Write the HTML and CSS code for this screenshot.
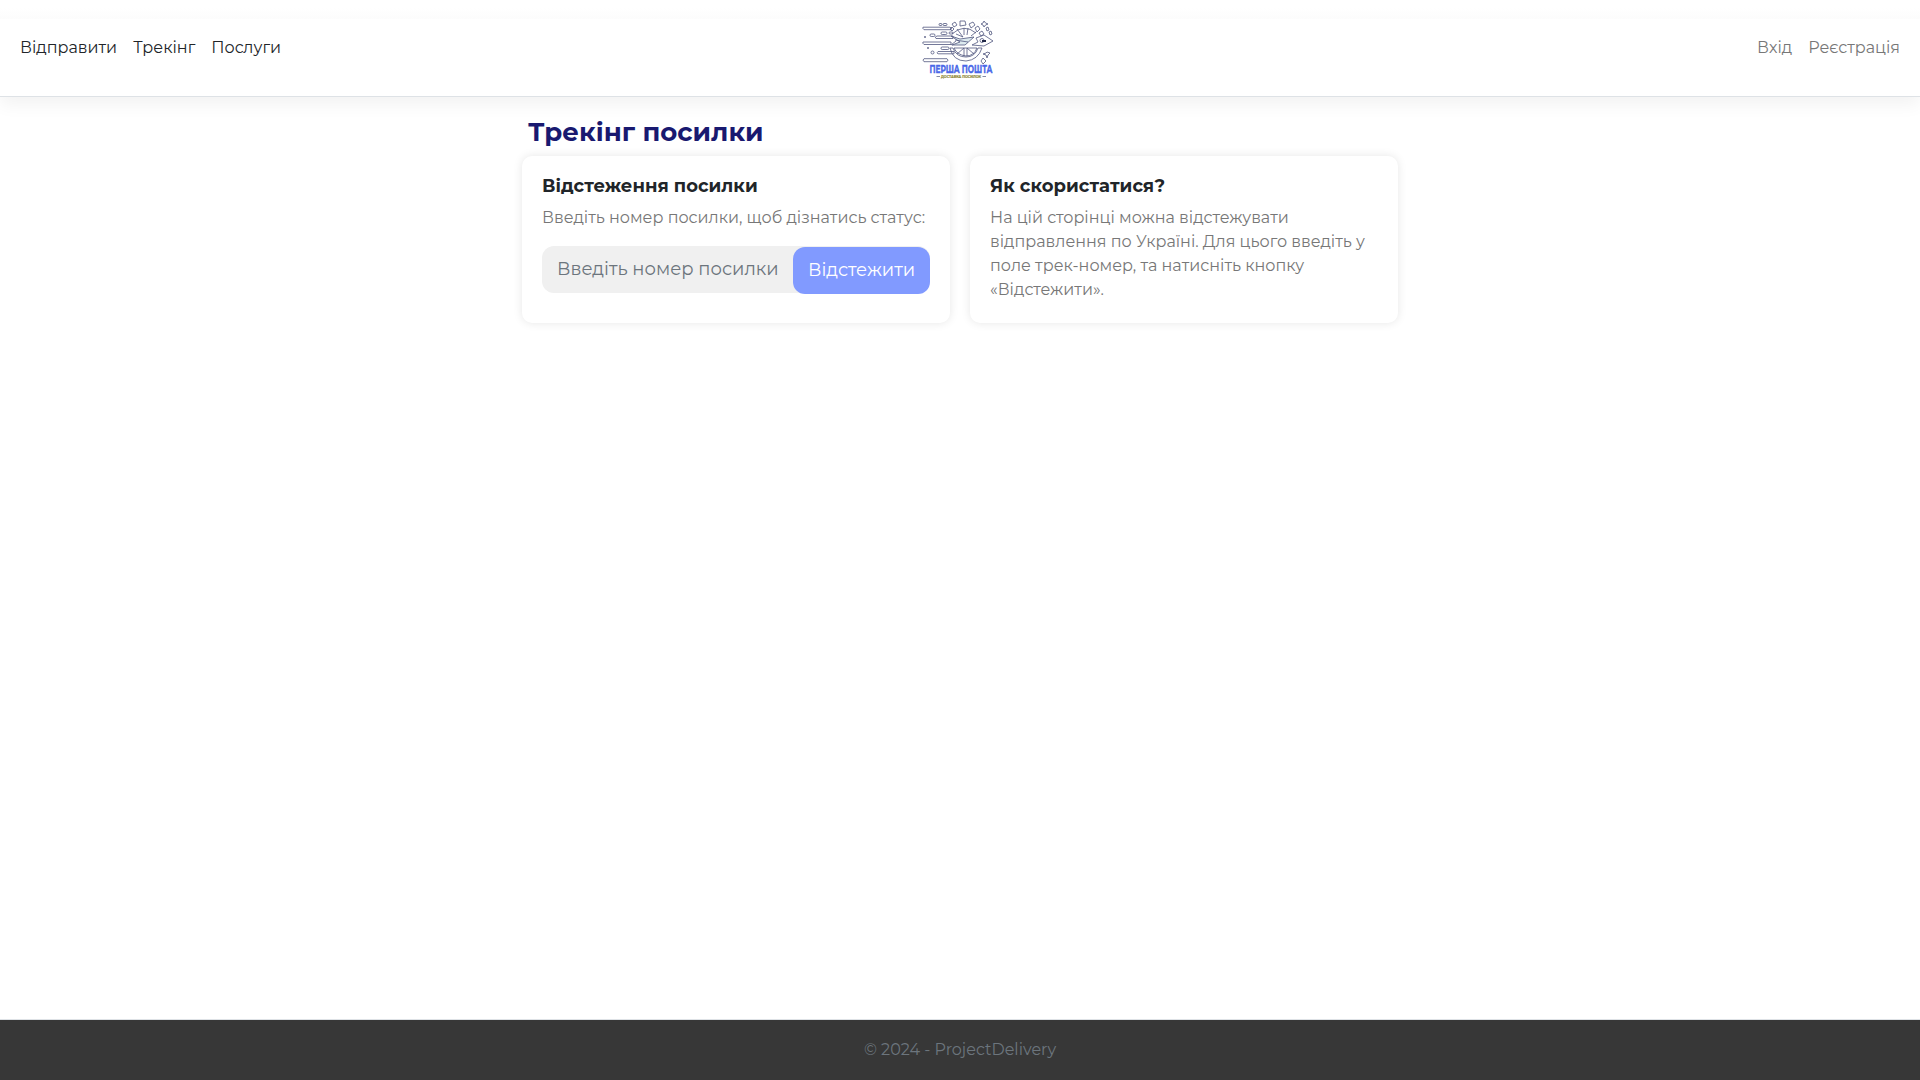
FILE: index.html
```html
<!DOCTYPE html>
<html lang="uk">
<head>
<meta charset="utf-8">
<title>Трекінг посилки</title>
<link rel="stylesheet" href="styles.css">
</head>
<body>
<header class="header">
  <nav class="nav">
    <a class="nav-link">Відправити</a>
    <a class="nav-link">Трекінг</a>
    <a class="nav-link">Послуги</a>
  </nav>
  <svg class="logo" width="80" height="66" viewBox="0 0 80 66" fill="none" stroke="#50577f" stroke-width="0.8">
    <g>
      <path d="M2 7.2H29Q32 8 30 9.700H3Q1 8 2 7.200ZM2 22H30V24.500H3Q1 23 2 22ZM3 38.700H26Q28 40 26 41.700H3Q1 40 3 38.700ZM16 16H32V18.500H15Q13 17 16 16ZM17 31.500H33V33.800H17Q15 33 17 31.500Z"/>
      <rect x="18" y="3.500" width="3" height="2" rx="1"/><rect x="22" y="3.500" width="4" height="2" rx="1"/>
      <rect x="9" y="14" width="5" height="2.500" rx="1.200"/><rect x="20" y="12" width="6" height="2.500" rx="1.200"/><rect x="28" y="12" width="4" height="2" rx="1"/>
      <rect x="20" y="27" width="8" height="2.500" rx="1.200"/><circle cx="11.500" cy="32.500" r="1.500"/><path d="M3 17h2M4 16v2M6 28h2M7 27v2"/>
    </g>
    <g>
      <path d="M31 14Q43 3 55 13M29 28Q32 41 45 41Q57 40 61 28L57 28Q54 37 45 37Q35 37 32 28Z"/>
      <path d="M33 28H56Q53 36 45 36Q36 35 33 28ZM43 28V36M46 28V36M36 34L43 28M53 34L46 28M35 14L42 17L36 9M43 15V8M46 15L47 8M50 16L55 12"/>
      <path d="M30 16L39 19L53 17L44 25L31 25L39 22Z" fill="#dce9ee"/><path d="M34 20L47 22M30 25L35 21"/>
      <path d="M55 18L63 15L72 21L63 26L51 25L57 22Z"/><circle cx="61" cy="20.500" r="2"/><path d="M61 21L65 21" stroke="#202746" stroke-width="2"/>
    </g>
    <g>
      <path d="M31 4L34 2L36 5L33 7ZM39 1H44L45 5L39 6ZM48 4L52 2L54 5L50 8ZM54 8L57 6L59 9L56 12ZM58 13L61 11L63 14L60 16ZM29 9L31 7L33 9L31 11Z"/>
      <path d="M63 1L64.500 3L67 4L64.500 5L63 7L62 5L60 4L62 3ZM65 8L67 7L68 10L66 11ZM68 12L70 11L71 14L69 15ZM66 32L69 33L67 35L66 38L65 35L62 34L65 33ZM62 38L65 41L62 44L60 41Z"/>
    </g>
    <text class="logo-name" x="8.500" y="52.500" textLength="63" lengthAdjust="spacingAndGlyphs">ПЕРША ПОШТА</text>
    <text class="logo-tagline" x="20" y="58" textLength="40" lengthAdjust="spacingAndGlyphs">ДОСТАВКА ПОСИЛОК</text>
    <path d="M15.500 56.500H19M61.500 56.500H65" stroke-width="0.7"/>
  </svg>
  <nav class="nav account">
    <a class="nav-link">Вхід</a>
    <a class="nav-link">Реєстрація</a>
  </nav>
</header>
<main class="page">
  <h1 class="title">Трекінг посилки</h1>
  <div class="cards">
    <section class="card">
      <h2 class="card-title">Відстеження посилки</h2>
      <p class="card-text">Введіть номер посилки, щоб дізнатись статус:</p>
      <form class="search">
        <input class="search-input" type="text" placeholder="Введіть номер посилки">
        <button class="search-button" type="button">Відстежити</button>
      </form>
    </section>
    <section class="card">
      <h2 class="card-title">Як скористатися?</h2>
      <p class="card-text">На цій сторінці можна відстежувати відправлення по Україні. Для цього введіть у поле трек-номер, та натисніть кнопку «Відстежити».</p>
    </section>
  </div>
</main>
<footer class="footer">© 2024 - ProjectDelivery</footer>
</body>
</html>
```
FILE: styles.css
```css
* { box-sizing: border-box; }

body {
  margin: 0;
  min-height: 1080px;
  display: flex;
  flex-direction: column;
  background: #fff;
  color: #212529;
  font-family: Montserrat, Inter, sans-serif;
  font-size: 16px;
  font-weight: 400;
  line-height: 24px;
}

.header {
  height: 97px;
  display: grid;
  grid-template-columns: 1fr 80px 1fr;
  align-items: start;
  padding: 0 20px;
  border-bottom: 1px solid #dee2e6;
  background: linear-gradient(#fff 8px, #fcfcfc 19px, #fff 19px);
  box-shadow: 0 8px 16px rgba(0, 0, 0, 0.05);
}

.nav { display: flex; gap: 16px; padding-top: 36px; }
.account { justify-content: flex-end; color: #777; }
.nav-link { white-space: nowrap; }
.logo { margin: 20px 0 0 1px; overflow: visible; }

.logo-name {
  font: 700 10px Montserrat, Inter, sans-serif;
  fill: #4967e8;
  stroke: #4967e8;
  stroke-width: 0.4px;
}

.logo-tagline {
  font: 700 4px Montserrat, Inter, sans-serif;
  fill: #8d8738;
  stroke: #8d8738;
  stroke-width: 0.2px;
}

.page { width: 876px; margin: 0 auto; flex: 1; padding-top: 19px; }

.title {
  margin: 0 0 7px;
  padding-left: 6px;
  color: #191970;
  font-size: 26px;
  font-weight: 700;
  line-height: 33px;
}

.cards { display: grid; grid-template-columns: repeat(2, minmax(0, 1fr)); gap: 20px; }

.card {
  height: 167px;
  padding: 20px;
  border-radius: 10px;
  background: #fff;
  box-shadow: 0 0 10px rgba(0, 0, 0, 0.1);
}

.card-title {
  margin: 0 0 9px;
  font-size: 18px;
  font-weight: 700;
  line-height: 21px;
}

.card-text { margin: 0; color: #777; }

.search {
  height: 47px;
  display: flex;
  margin-top: 16px;
  border-radius: 12px;
  background: #f0f0f0;
}

.search-input {
  flex: 1;
  min-width: 0;
  padding: 0 0 2px 15px;
  border: 0;
  background: transparent;
  font: inherit;
  font-size: 18px;
}

.search-input::placeholder { color: #6c757d; opacity: 1; }

.search-button {
  width: 137px;
  height: 47px;
  margin-top: 1px;
  padding: 0 0 2px;
  border: 0;
  border-radius: 12px;
  background: #819aff;
  color: #fff;
  font: inherit;
  font-size: 18px;
}

.footer {
  height: 61px;
  padding-top: 18px;
  border-top: 1px solid #dee2e6;
  background: #373737;
  color: #6c757d;
  text-align: center;
}
```
